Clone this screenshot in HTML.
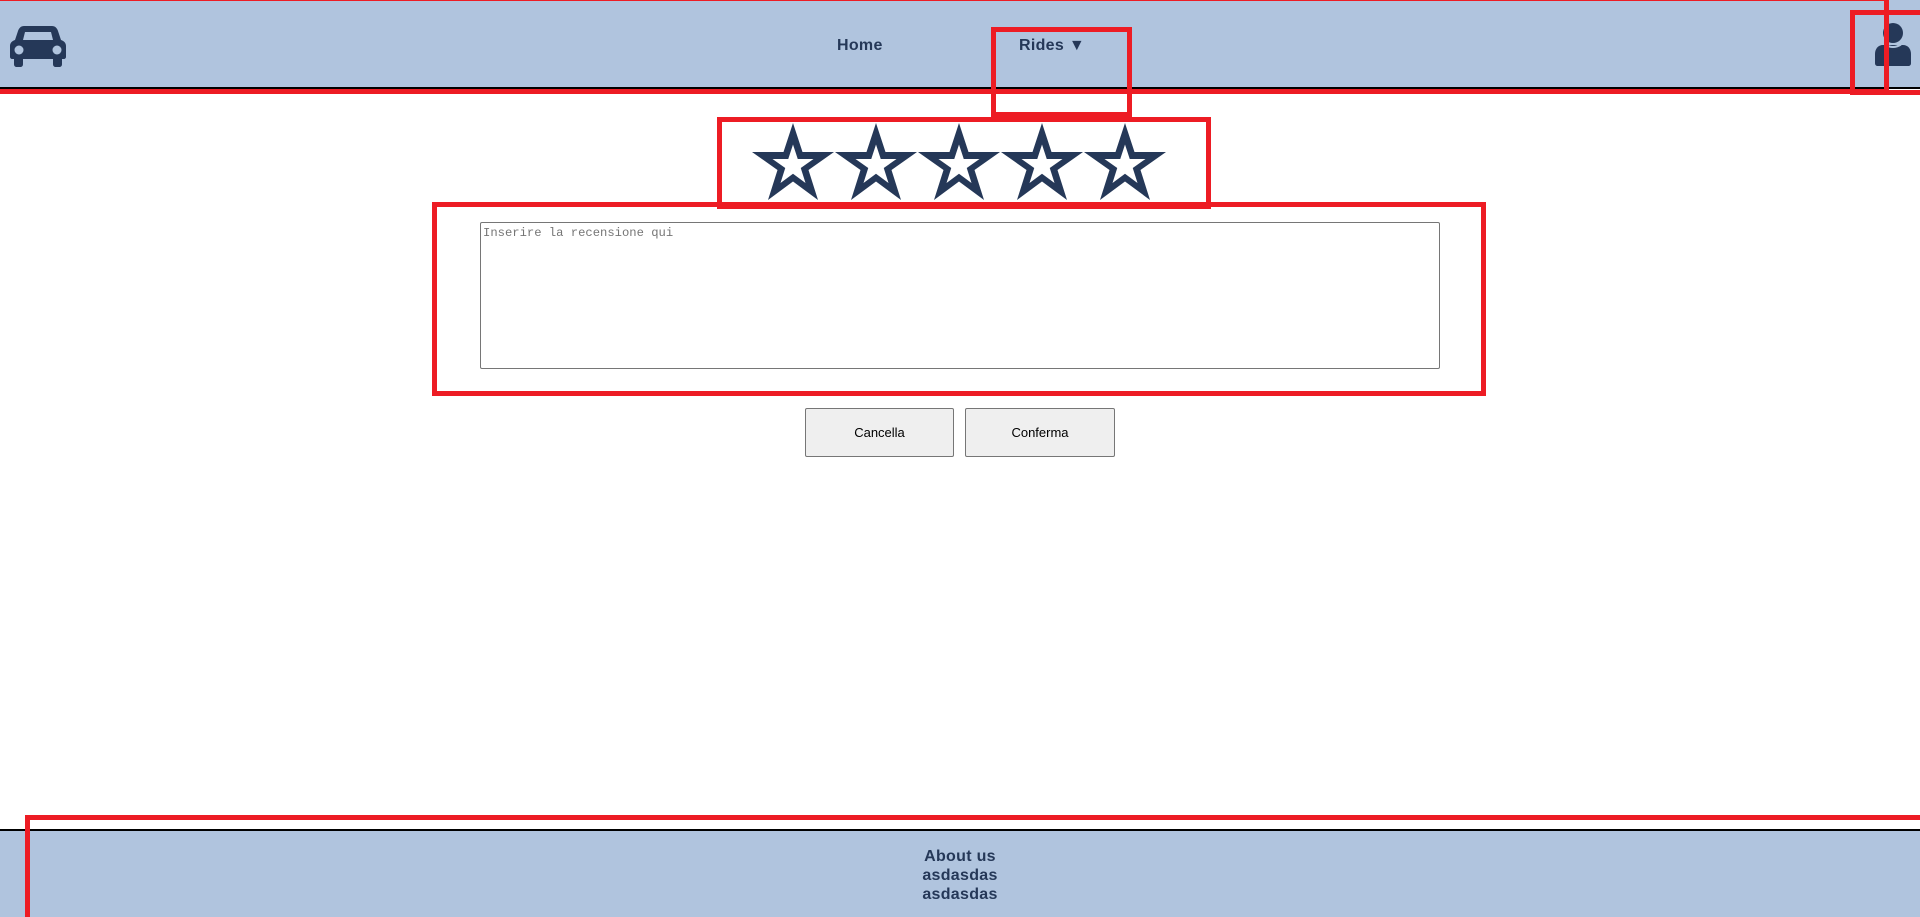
<!DOCTYPE html>
<html><head><meta charset="utf-8"><style>
*{margin:0;padding:0;box-sizing:border-box}
html,body{width:1920px;height:917px;overflow:hidden;background:#fff;font-family:"Liberation Sans",sans-serif;position:relative}
.a{position:absolute}
.r{position:absolute;border:5px solid #ed1c24}
.nav{color:#253858;font-weight:bold;font-size:16px;letter-spacing:.3px}
</style></head><body>
<div class="a" style="left:0;top:0;width:1920px;height:89px;background:#b0c4de;border-bottom:2px solid #000"></div>
<svg class="a" style="left:10px;top:23px" width="56" height="44" viewBox="0 0 56 44">
<path fill="#253858" d="M14 3h28c3 0 5 2 6 5l3 9c3 1 5 3 5 6v11c0 1-1 2-2 2h-2v5c0 2-1 3-3 3h-3c-2 0-3-1-3-3v-5H13v5c0 2-1 3-3 3H7c-2 0-3-1-3-3v-5H2c-1 0-2-1-2-2V23c0-3 2-5 5-6l3-9c1-3 3-5 6-5zM15 9l-2 8h30l-2-8z"/>
<circle cx="9" cy="27" r="4.5" fill="#b0c4de"/><circle cx="47" cy="27" r="4.5" fill="#b0c4de"/>
</svg>
<div class="a nav" style="left:837px;top:37px">Home</div>
<div class="a nav" style="left:1019px;top:37px">Rides ▼</div>
<svg class="a" style="left:1875px;top:23px" width="36" height="43" viewBox="0 0 36 43">
<circle cx="18" cy="10" r="10" fill="#253858"/>
<path fill="#253858" d="M8 22h20c5 0 8 4 8 9v9c0 2-1 3-3 3H3c-2 0-3-1-3-3v-9c0-5 3-9 8-9z"/>
<path d="M10 21.5q8 5 16 0" stroke="#b0c4de" stroke-width="2" fill="none"/>
</svg>
<svg class="a" style="left:752px;top:122px" width="420" height="80" viewBox="0 0 420 80">
<defs><path id="s" fill="#253858" fill-rule="evenodd" d="M41 1L50.5 30H82L56.5 48L66 78L41 59.5L16 78L25.5 48L0 30H31.5ZM41 22.5L45.75 37H61.5L48.75 46L53.5 61L41 51.75L28.5 61L33.25 46L20.5 37H36.25Z"/></defs>
<use href="#s" x="0"/><use href="#s" x="83"/><use href="#s" x="166"/><use href="#s" x="249"/><use href="#s" x="332"/>
</svg>
<div class="a" style="left:480px;top:222px;width:960px;height:147px;border:1px solid #767676;border-radius:2px"></div>
<div class="a" style="left:483px;top:226px;font-family:'Liberation Mono',monospace;font-size:12.2px;color:#757575">Inserire la recensione qui</div>
<div class="a" style="left:805px;top:408px;width:149px;height:49px;background:#efefef;border:1px solid #767676;border-radius:2px;font-size:13px;text-align:center;line-height:47px">Cancella</div>
<div class="a" style="left:965px;top:408px;width:150px;height:49px;background:#efefef;border:1px solid #767676;border-radius:2px;font-size:13px;text-align:center;line-height:47px">Conferma</div>
<div class="a" style="left:0;top:829px;width:1920px;height:88px;background:#b0c4de;border-top:2px solid #000"></div>
<div class="a nav" style="left:0;top:847px;width:1920px;text-align:center;line-height:19px">About us<br>asdasdas<br>asdasdas</div>
<div class="r" style="left:-10px;top:-4px;width:1899px;height:98px"></div>
<div class="r" style="left:1850px;top:10px;width:70px;height:85px;border-right:none"></div>
<div class="r" style="left:991px;top:27px;width:141px;height:90px"></div>
<div class="r" style="left:717px;top:117px;width:494px;height:92px"></div>
<div class="r" style="left:432px;top:202px;width:1054px;height:194px"></div>
<div class="r" style="left:25px;top:815px;width:1895px;height:102px;border-right:none;border-bottom:none"></div>
</body></html>
